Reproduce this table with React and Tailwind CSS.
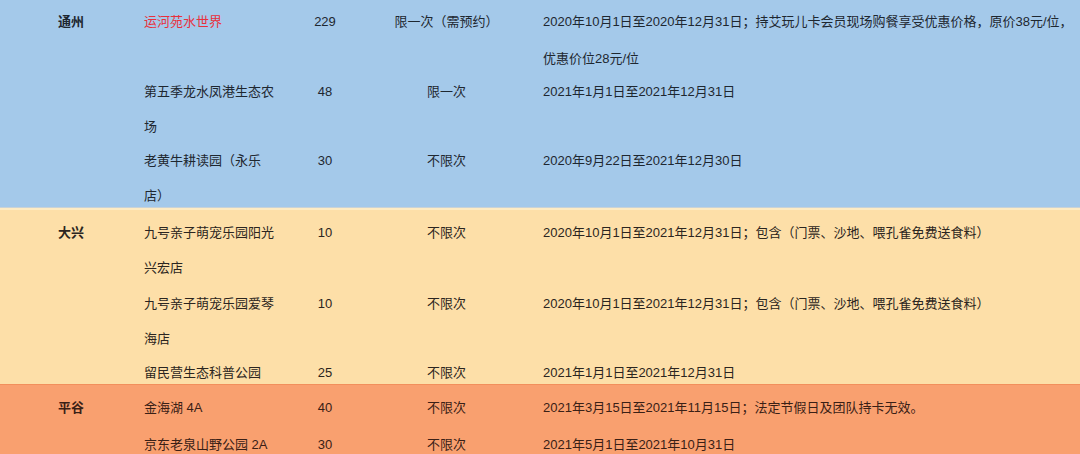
import React from "react";

const groups = [
  {
    district: "通州",
    bg: "bg-[#a4c9ea]",
    text: "text-[#1e2730]",
    rows: [
      {
        name: "运河苑水世界",
        red: true,
        price: "229",
        limit: "限一次（需预约）",
        date: ["2020年10月1日至2020年12月31日；持艾玩儿卡会员现场购餐享受优惠价格，原价38元/位，", "优惠价位28元/位"],
        h: "h-[66px] pt-[5px]",
      },
      { name: "第五季龙水凤港生态农场", price: "48", limit: "限一次", date: ["2021年1月1日至2021年12月31日"], h: "h-[69px] pt-[9px]" },
      { name: "老黄牛耕读园（永乐店）", price: "30", limit: "不限次", date: ["2020年9月22日至2021年12月30日"], h: "h-[72px] pt-[9px]" },
    ],
  },
  {
    district: "大兴",
    bg: "bg-[#fddfa8] border-t border-[#c9d2d6]",
    inner: "border-t-2 border-[#fdebc4]",
    text: "text-[#2b2520]",
    rows: [
      { name: "九号亲子萌宠乐园阳光兴宏店", price: "10", limit: "不限次", date: ["2020年10月1日至2021年12月31日；包含（门票、沙地、喂孔雀免费送食料）"], h: "h-[69px] pt-[6px]" },
      { name: "九号亲子萌宠乐园爱琴海店", price: "10", limit: "不限次", date: ["2020年10月1日至2021年12月31日；包含（门票、沙地、喂孔雀免费送食料）"], h: "h-[69px] pt-[8px]" },
      { name: "留民营生态科普公园", price: "25", limit: "不限次", date: ["2021年1月1日至2021年12月31日"], h: "h-[36px] pt-[8px]" },
    ],
  },
  {
    district: "平谷",
    bg: "bg-[#f9a06f] border-t border-[#f28f5c]",
    text: "text-[#3a2016]",
    rows: [
      { name: "金海湖 4A", price: "40", limit: "不限次", date: ["2021年3月15日至2021年11月15日；法定节假日及团队持卡无效。"], h: "h-[36px] pt-[6px]" },
      { name: "京东老泉山野公园 2A", price: "30", limit: "不限次", date: ["2021年5月1日至2021年10月31日"], h: "h-[36px] pt-[7px]" },
    ],
  },
];

const Row = ({ row, district }) => (
  <div className={`grid grid-cols-[86px_156px_50px_193px_1fr] pl-[58px] ${row.h}`}>
    <div className="font-bold">{district}</div>
    <div className={`w-[132px] ${row.red ? "text-[#e8303c]" : ""}`}>{row.name}</div>
    <div className="text-center">{row.price}</div>
    <div className="text-center">{row.limit}</div>
    <div>
      {row.date.map((line, i) => (
        <div key={line} className={`whitespace-nowrap ${i > 0 ? "mt-[2px]" : ""}`}>{line}</div>
      ))}
    </div>
  </div>
);

export default function App() {
  return (
    <div
      className="w-[1080px] h-[454px] overflow-hidden bg-[#f9a06f] text-[13px] leading-[34.5px]"
      style={{ fontFamily: '"Liberation Sans", "Noto Sans CJK SC", sans-serif' }}
    >
      {groups.map((g) => (
        <section key={g.district} className={`${g.bg} ${g.text}`}>
          <div className={g.inner || ""}>
            {g.rows.map((row, i) => (
              <Row key={row.name} row={row} district={i === 0 ? g.district : ""} />
            ))}
          </div>
        </section>
      ))}
    </div>
  );
}
